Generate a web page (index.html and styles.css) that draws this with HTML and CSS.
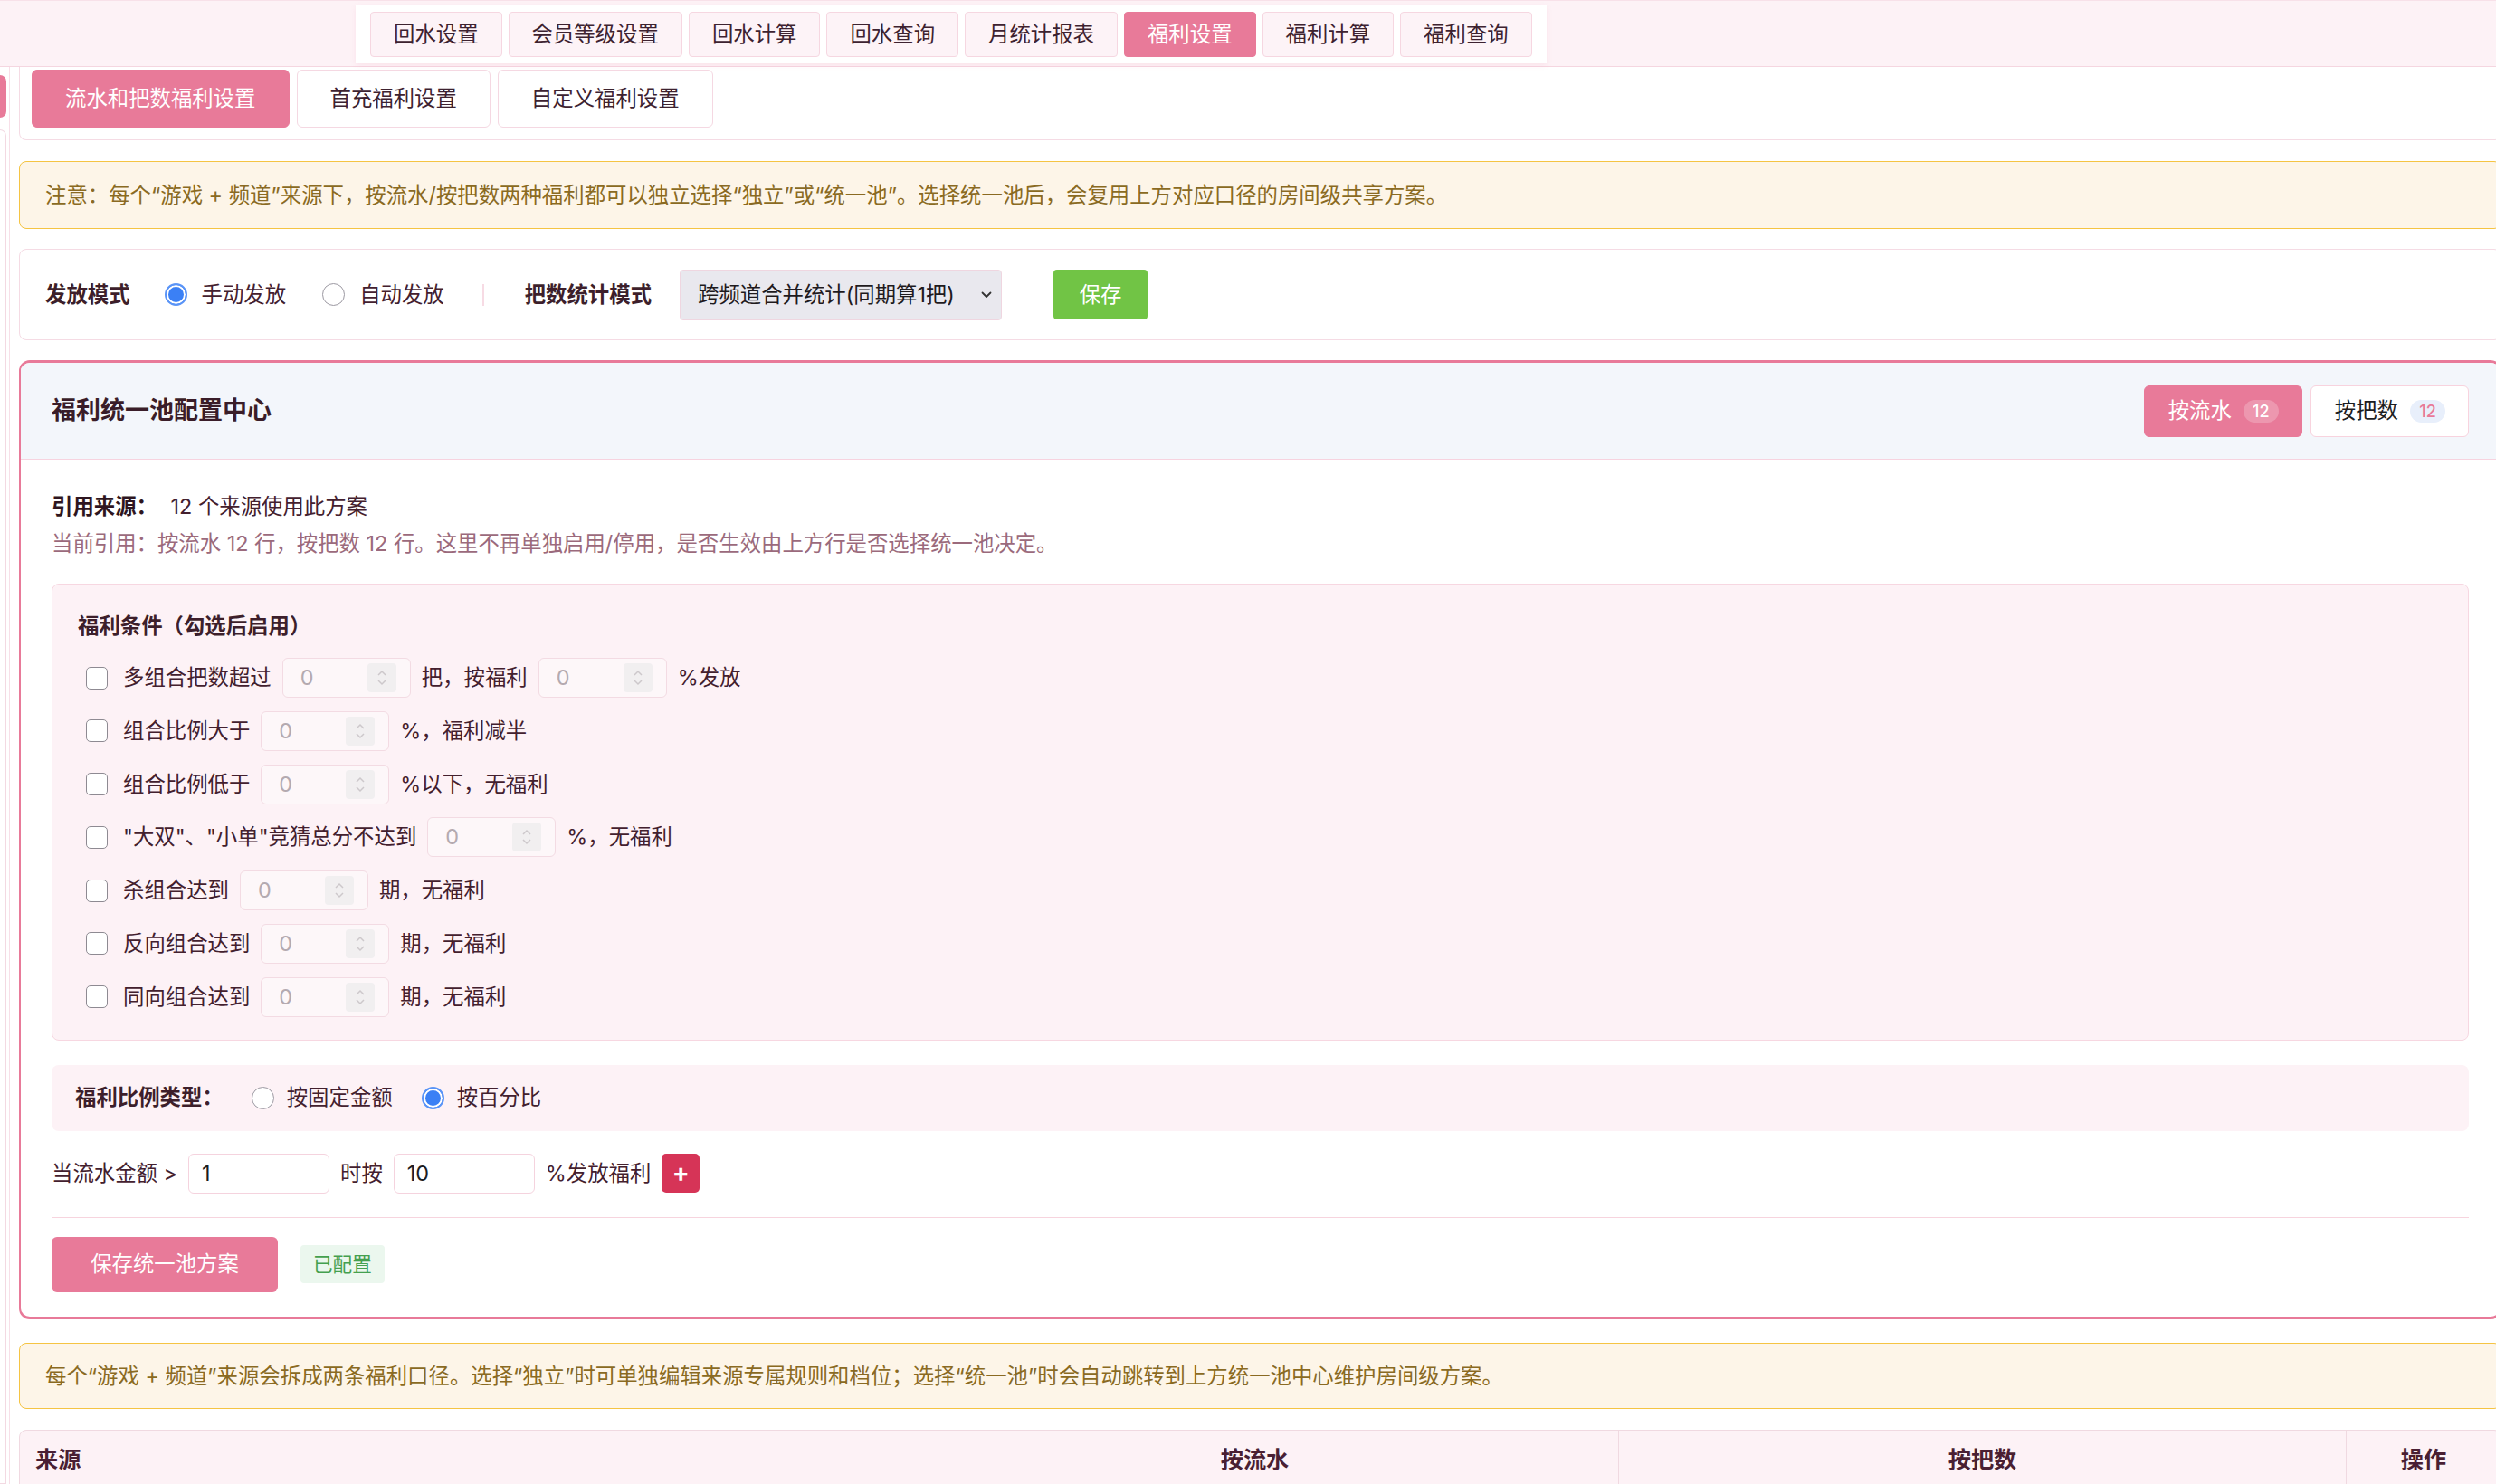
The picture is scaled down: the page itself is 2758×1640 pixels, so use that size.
FILE: index.html
```html
<!DOCTYPE html>
<html lang="zh-CN">
<head>
  <meta charset="UTF-8">
  <meta name="viewport" content="width=device-width, initial-scale=1.0">
  <title>福利设置</title>
  <link rel="stylesheet" href="styles.css">
</head>
<body>
  <header class="topbar">
    <nav class="top-tabs">
      <button class="top-tab">回水设置</button>
      <button class="top-tab">会员等级设置</button>
      <button class="top-tab">回水计算</button>
      <button class="top-tab">回水查询</button>
      <button class="top-tab">月统计报表</button>
      <button class="top-tab active">福利设置</button>
      <button class="top-tab">福利计算</button>
      <button class="top-tab">福利查询</button>
    </nav>
  </header>

  <div class="layout">
    <aside class="sidebar">
      <div class="side-active"></div>
      <div class="side-card"></div>
    </aside>

    <main class="main">
      <div class="sub-tabs">
        <button class="sub-tab active">流水和把数福利设置</button>
        <button class="sub-tab">首充福利设置</button>
        <button class="sub-tab">自定义福利设置</button>
      </div>

      <div class="notice">注意：每个“游戏 + 频道”来源下，按流水/按把数两种福利都可以独立选择“独立”或“统一池”。选择统一池后，会复用上方对应口径的房间级共享方案。</div>

      <!-- 发放模式 -->
      <div class="mode-card">
        <span class="field-label first">发放模式</span>
        <label class="radio-opt"><span class="radio on"></span>手动发放</label>
        <label class="radio-opt last"><span class="radio"></span>自动发放</label>
        <span class="sep"></span>
        <span class="field-label">把数统计模式</span>
        <div class="select">
          <span>跨频道合并统计(同期算1把)</span>
          <svg width="12" height="8" viewBox="0 0 12 8"><path d="M1.5 1.5l4.5 4.5 4.5-4.5" fill="none" stroke="#333" stroke-width="1.8" stroke-linecap="round" stroke-linejoin="round"/></svg>
        </div>
        <button class="btn-green">保存</button>
      </div>

      <!-- 统一池 -->
      <section class="pool-card">
        <div class="pool-head">
          <h2>福利统一池配置中心</h2>
          <div class="pool-switch">
            <button class="switch-btn active">按流水<span class="count">12</span></button>
            <button class="switch-btn">按把数<span class="count">12</span></button>
          </div>
        </div>

        <div class="pool-body">
          <p class="ref-line"><b>引用来源：</b> 12 个来源使用此方案</p>
          <p class="ref-note">当前引用：按流水 12 行，按把数 12 行。这里不再单独启用/停用，是否生效由上方行是否选择统一池决定。</p>

          <div class="cond-box">
            <h3>福利条件（勾选后启用）</h3>
            <div class="cond-list">
              <div class="cond-row">
                <span class="check"></span>多组合把数超过
                <div class="num"><span>0</span><span class="spin"><svg width="12" height="22" viewBox="0 0 12 22"><path d="M2 8l4-4 4 4M2 14l4 4 4-4" fill="none" stroke="#cdc8cb" stroke-width="1.5"/></svg></span></div>
                把，按福利
                <div class="num"><span>0</span><span class="spin"><svg width="12" height="22" viewBox="0 0 12 22"><path d="M2 8l4-4 4 4M2 14l4 4 4-4" fill="none" stroke="#cdc8cb" stroke-width="1.5"/></svg></span></div>
                %发放
              </div>
              <div class="cond-row">
                <span class="check"></span>组合比例大于
                <div class="num"><span>0</span><span class="spin"><svg width="12" height="22" viewBox="0 0 12 22"><path d="M2 8l4-4 4 4M2 14l4 4 4-4" fill="none" stroke="#cdc8cb" stroke-width="1.5"/></svg></span></div>
                %，福利减半
              </div>
              <div class="cond-row">
                <span class="check"></span>组合比例低于
                <div class="num"><span>0</span><span class="spin"><svg width="12" height="22" viewBox="0 0 12 22"><path d="M2 8l4-4 4 4M2 14l4 4 4-4" fill="none" stroke="#cdc8cb" stroke-width="1.5"/></svg></span></div>
                %以下，无福利
              </div>
              <div class="cond-row">
                <span class="check"></span>"大双"、"小单"竞猜总分不达到
                <div class="num"><span>0</span><span class="spin"><svg width="12" height="22" viewBox="0 0 12 22"><path d="M2 8l4-4 4 4M2 14l4 4 4-4" fill="none" stroke="#cdc8cb" stroke-width="1.5"/></svg></span></div>
                %，无福利
              </div>
              <div class="cond-row">
                <span class="check"></span>杀组合达到
                <div class="num"><span>0</span><span class="spin"><svg width="12" height="22" viewBox="0 0 12 22"><path d="M2 8l4-4 4 4M2 14l4 4 4-4" fill="none" stroke="#cdc8cb" stroke-width="1.5"/></svg></span></div>
                期，无福利
              </div>
              <div class="cond-row">
                <span class="check"></span>反向组合达到
                <div class="num"><span>0</span><span class="spin"><svg width="12" height="22" viewBox="0 0 12 22"><path d="M2 8l4-4 4 4M2 14l4 4 4-4" fill="none" stroke="#cdc8cb" stroke-width="1.5"/></svg></span></div>
                期，无福利
              </div>
              <div class="cond-row">
                <span class="check"></span>同向组合达到
                <div class="num"><span>0</span><span class="spin"><svg width="12" height="22" viewBox="0 0 12 22"><path d="M2 8l4-4 4 4M2 14l4 4 4-4" fill="none" stroke="#cdc8cb" stroke-width="1.5"/></svg></span></div>
                期，无福利
              </div>
            </div>
          </div>

          <div class="ratio-box">
            <span class="field-label">福利比例类型：</span>
            <label class="radio-opt"><span class="radio"></span>按固定金额</label>
            <label class="radio-opt"><span class="radio on"></span>按百分比</label>
          </div>

          <div class="amount-row">
            当流水金额 &gt;
            <div class="amount-input">1</div>
            时按
            <div class="amount-input">10</div>
            %发放福利
            <button class="add-btn">+</button>
          </div>

          <div class="divider"></div>

          <div class="actions">
            <button class="btn-save">保存统一池方案</button>
            <span class="tag-ok">已配置</span>
          </div>
        </div>
      </section>

      <div class="notice second">每个“游戏 + 频道”来源会拆成两条福利口径。选择“独立”时可单独编辑来源专属规则和档位；选择“统一池”时会自动跳转到上方统一池中心维护房间级方案。</div>

      <div class="table">
        <div class="th">来源</div>
        <div class="th">按流水</div>
        <div class="th">按把数</div>
        <div class="th">操作</div>
      </div>
    </main>
  </div>
</body>
</html>
```

FILE: styles.css
```css
/* Reset */
* {
  margin: 0;
  padding: 0;
  box-sizing: border-box;
}

body {
  font-family: Inter, "Noto Sans CJK SC", sans-serif;
  font-size: 23.4px;
  line-height: 34px;
  color: #43202e;
  background: #fff;
  width: 2758px;
  height: 1640px;
  overflow: hidden;
}

button {
  font: inherit;
  cursor: pointer;
}

/* Top navigation */
.topbar {
  height: 74px;
  padding: 5px 0 0 393px;
  background: #fdf2f6;
  border-top: 1px solid #f8e1e9;
  border-bottom: 1px solid #f5d6e0;
}

.top-tabs {
  display: inline-flex;
  gap: 7px;
  padding: 7px 16px;
  background: #fff;
  box-shadow: 0 2px 6px rgba(232, 122, 153, 0.12);
}

.top-tab {
  height: 50px;
  padding: 0 25px;
  background: #fdf3f7;
  border: 1px solid #f6d7e1;
  border-radius: 4px;
  color: #3d2230;
}

.top-tab.active {
  background: #e87a99;
  border-color: #e87a99;
  color: #fff;
}

/* Page layout */
.layout {
  display: flex;
  height: 1566px;
}

.sidebar {
  flex: none;
  width: 11px;
  display: flex;
  flex-direction: column;
  border-right: 1px solid #f8dfe8;
}

.side-active {
  width: 7px;
  height: 47px;
  margin-top: 9px;
  background: #e87a99;
  border-radius: 0 8px 8px 0;
}

.side-card {
  flex: 1;
  width: 7px;
  margin-top: 13px;
  border: 1px solid #f3d9e2;
  border-left: none;
  border-radius: 0 8px 0 0;
}

.main {
  flex: none;
  width: 2749px;
  margin-left: 4px;
  padding-left: 5px;
  border-left: 1px solid #f5d6e0;
}

/* Sub tabs */
.sub-tabs {
  display: flex;
  gap: 8px;
  padding: 3px 13px 13px;
  border: 1px solid #f5dbe4;
  border-top: none;
  border-radius: 0 0 8px 8px;
}

.sub-tab {
  height: 64px;
  padding: 0 36px;
  background: #fff;
  border: 1px solid #f5d8e2;
  border-radius: 6px;
  color: #3d2230;
}

.sub-tab.active {
  background: #e87a99;
  border-color: #e87a99;
  color: #fff;
}

/* Notices */
.notice {
  margin-top: 23px;
  padding: 20px 28px;
  line-height: 33px;
  background: #fdf5e8;
  border: 1px solid #f5c443;
  border-radius: 8px;
  color: #8a6a22;
  white-space: nowrap;
}

.notice.second {
  margin-top: 26px;
  padding: 19px 28px;
}

/* Mode card */
.mode-card {
  margin-top: 22px;
  height: 101px;
  padding: 0 28px;
  display: flex;
  align-items: center;
  border: 1px solid #f5dbe4;
  border-radius: 8px;
}

.field-label {
  font-weight: 700;
  color: #3d1f2b;
  margin-right: 31px;
}

.field-label.first {
  margin-right: 38px;
}

.radio-opt {
  display: flex;
  align-items: center;
  gap: 16px;
  margin-right: 40px;
}

.radio-opt.last {
  margin-right: 0;
}

.radio {
  width: 25px;
  height: 25px;
  border-radius: 50%;
  border: 1.5px solid #9c99a2;
  background: #fff;
}

.radio.on {
  background: #3b80f5;
  border: 2px solid #5a94f7;
  box-shadow: inset 0 0 0 2px #fff;
}

.sep {
  width: 2px;
  height: 24px;
  margin: 0 45px 0 42px;
  background: #f7dbe4;
}

.select {
  width: 356px;
  height: 56px;
  padding: 0 10px 0 19px;
  display: flex;
  align-items: center;
  justify-content: space-between;
  background: #e9e8ee;
  border: 1px solid #efd6e0;
  border-radius: 4px;
  color: #1f1a1d;
}

.btn-green {
  width: 104px;
  height: 55px;
  margin-left: 57px;
  background: #71c445;
  border: none;
  border-radius: 4px;
  color: #fff;
}

/* Pool card */
.pool-card {
  margin-top: 22px;
  border: 2px solid #e87a99;
  border-top-width: 3px;
  border-bottom-width: 3px;
  border-radius: 12px;
  overflow: hidden;
}

.pool-head {
  height: 107px;
  padding: 0 34px;
  display: flex;
  align-items: center;
  justify-content: space-between;
  background: #f3f6fb;
  border-bottom: 1px solid #f7d3df;
}

.pool-head h2 {
  font-size: 27px;
  font-weight: 700;
  color: #3a1d29;
}

.pool-switch {
  display: flex;
  gap: 9px;
}

.switch-btn {
  height: 57px;
  padding: 0 25px 0 26px;
  display: flex;
  align-items: center;
  gap: 13px;
  background: #fff;
  border: 1px solid #f8d3de;
  border-radius: 6px;
  color: #1d1d1f;
}

.switch-btn.active {
  background: #e87a99;
  border-color: #e87a99;
  color: #fff;
}

.count {
  min-width: 39px;
  height: 25px;
  padding: 0 8px;
  border-radius: 13px;
  font-size: 18px;
  font-weight: 500;
  line-height: 25px;
  text-align: center;
  background: #e8effb;
  color: #e87a99;
}

.switch-btn.active .count {
  background: rgba(255, 255, 255, 0.22);
  color: #fff;
}

.pool-body {
  padding: 35px 34px 27px;
}

.ref-line b {
  font-weight: 700;
  color: #2e1520;
  margin-right: 8px;
}

.ref-note {
  margin-top: 7px;
  color: #9b6a7c;
}

/* Conditions */
.cond-box {
  margin-top: 27px;
  padding: 29px 28px 25px;
  background: #fdf2f6;
  border: 1px solid #f7d7e1;
  border-radius: 8px;
}

.cond-box h3 {
  font-size: 23.4px;
  font-weight: 700;
  color: #3d1f2b;
  margin-bottom: 18px;
}

.cond-list {
  display: flex;
  flex-direction: column;
  gap: 14.8px;
}

.cond-row {
  height: 44px;
  display: flex;
  align-items: center;
}

.check {
  width: 24px;
  height: 25px;
  margin: 0 17px 0 9px;
  background: #fff;
  border: 1.5px solid #8e8a92;
  border-radius: 5px;
}

.num {
  width: 142px;
  height: 44px;
  margin: 0 12px;
  padding: 0 15px 0 19px;
  display: flex;
  align-items: center;
  justify-content: space-between;
  background: #fdf7f9;
  border: 1px solid #f3dbe3;
  border-radius: 6px;
  color: #b4aab0;
}

.spin {
  width: 32px;
  height: 32px;
  display: flex;
  align-items: center;
  justify-content: center;
  background: #f1eff0;
  border-radius: 4px;
}

/* Ratio type */
.ratio-box {
  margin-top: 27px;
  height: 73px;
  padding: 0 26px;
  display: flex;
  align-items: center;
  background: #fdf2f6;
  border-radius: 8px;
}

.ratio-box .field-label {
  margin-right: 31px;
}

.ratio-box .radio-opt {
  gap: 14px;
  margin-right: 32px;
}

/* Amount row */
.amount-row {
  margin-top: 25px;
  height: 44px;
  display: flex;
  align-items: center;
}

.amount-input {
  width: 156px;
  height: 44px;
  margin: 0 12px;
  padding: 0 14px;
  display: flex;
  align-items: center;
  background: #fff;
  border: 1px solid #f5d3de;
  border-radius: 6px;
  color: #1d1d1f;
}

.add-btn {
  width: 42px;
  height: 43px;
  margin-left: 12px;
  background: #d63457;
  border: none;
  border-radius: 5px;
  color: #fff;
  font-size: 28px;
  font-weight: 700;
  line-height: 43px;
}

.divider {
  margin-top: 26px;
  height: 1px;
  background: #f7d4de;
}

.actions {
  margin-top: 21px;
  display: flex;
  align-items: center;
  gap: 25px;
}

.btn-save {
  width: 250px;
  height: 61px;
  background: #e87a99;
  border: none;
  border-radius: 6px;
  color: #fff;
}

.tag-ok {
  height: 42px;
  padding: 0 14px;
  line-height: 42px;
  font-size: 21.6px;
  background: #ebf7ee;
  color: #44a04f;
  border-radius: 4px;
}

/* Table header */
.table {
  margin-top: 23px;
  display: grid;
  grid-template-columns: 962px 804px 804px 1fr;
  background: #fdf2f6;
  border: 1px solid #f0d9e1;
  border-radius: 8px 8px 0 0;
}

.th {
  height: 64px;
  display: flex;
  align-items: center;
  justify-content: center;
  font-size: 25.2px;
  font-weight: 700;
  color: #4a1f33;
  border-left: 1px solid #f0d9e1;
}

.th:first-child {
  justify-content: flex-start;
  padding-left: 17px;
  border-left: none;
}
```
